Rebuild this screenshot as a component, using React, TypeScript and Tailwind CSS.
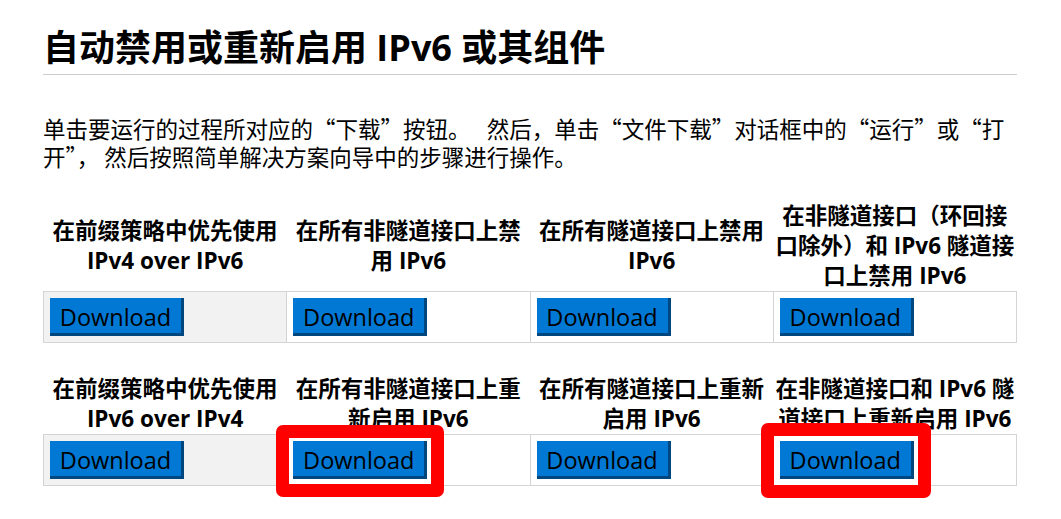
import React from "react";

type Cell = { title: string; highlight?: "a" | "b" };

const tableOne: Cell[] = [
  { title: "在前缀策略中优先使用 IPv4 over IPv6" },
  { title: "在所有非隧道接口上禁用 IPv6" },
  { title: "在所有隧道接口上禁用 IPv6" },
  { title: "在非隧道接口（环回接口除外）和 IPv6 隧道接口上禁用 IPv6" },
];

const tableTwo: Cell[] = [
  { title: "在前缀策略中优先使用 IPv6 over IPv4" },
  { title: "在所有非隧道接口上重新启用 IPv6", highlight: "a" },
  { title: "在所有隧道接口上重新启用 IPv6" },
  { title: "在非隧道接口和 IPv6 隧道接口上重新启用 IPv6", highlight: "b" },
];

function DownloadButton({ highlight }: { highlight?: "a" | "b" }) {
  return (
    <span className="relative inline-block align-top">
      {/* red annotation frame drawn over the screenshot */}
      {highlight === "a" && (
        <span className="absolute z-10 left-[-17px] right-[-17px] top-[-16px] bottom-[-18px] rounded-[7px] border-[13px] border-[#ff0000] bg-white" />
      )}
      {highlight === "b" && (
        <span className="absolute z-10 left-[-19px] right-[-17px] top-[-18px] bottom-[-19px] rounded-[7px] border-[13px] border-[#ff0000] bg-white" />
      )}
      <a
        href="#"
        className="relative z-20 flex h-[38px] w-[134px] items-center justify-center border-r-[3px] border-b-[3px] border-[#00467f] bg-[#0078d4] pt-[4px] text-[23.5px] text-black font-['Segoe_UI','Open_Sans',sans-serif]"
      >
        Download
      </a>
    </span>
  );
}

function DownloadTable({ cells, className }: { cells: Cell[]; className?: string }) {
  return (
    <table className={"w-full table-fixed border-collapse " + (className ?? "")}>
      <thead>
        <tr>
          {cells.map((c) => (
            <th
              key={c.title}
              className="px-[1px] align-middle text-center text-[22.5px] font-bold leading-[30px]"
            >
              {c.title}
            </th>
          ))}
        </tr>
      </thead>
      <tbody>
        <tr>
          {cells.map((c, i) => (
            <td
              key={c.title}
              className={
                "border border-[#d4d4d4] p-[6px] text-left " +
                (i === 0 ? "bg-[#f2f2f2]" : "bg-white")
              }
            >
              <DownloadButton highlight={c.highlight} />
            </td>
          ))}
        </tr>
      </tbody>
    </table>
  );
}

export default function App() {
  return (
    <div
      lang="zh-CN"
      className="h-[519px] w-[1061px] overflow-hidden bg-white text-black font-['Segoe_UI','Open_Sans','Noto_Sans_CJK_SC',sans-serif]"
    >
      <div className="px-[43px] pr-[44px]">
        <h1 className="border-b border-[#cccccc] pt-[26px] pb-[4px] text-[36px] font-bold leading-[44px]">
          自动禁用或重新启用 IPv6 或其组件
        </h1>

        <p className="mt-[39px] text-[22.5px] leading-[28px] font-['Noto_Sans_CJK_SC',sans-serif]">
          单击要运行的过程所对应的“下载”按钮。　 然后，单击“文件下载”对话框中的“运行”或“打开”， 然后按照简单解决方案向导中的步骤进行操作。
        </p>

        <DownloadTable cells={tableOne} className="mt-[31px]" />
        <DownloadTable cells={tableTwo} className="mt-[31px]" />
      </div>
    </div>
  );
}
